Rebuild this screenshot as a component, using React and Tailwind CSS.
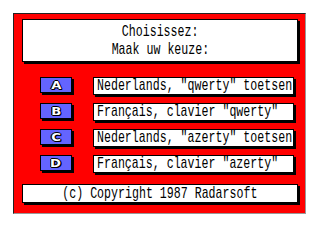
const options = [
  { key: "A", label: 'Nederlands, "qwerty" toetsen' },
  { key: "B", label: 'Français, clavier "qwerty"' },
  { key: "C", label: 'Nederlands, "azerty" toetsen' },
  { key: "D", label: 'Français, clavier "azerty"' },
];

function Txt({ children, origin = "origin-left" }) {
  return (
    <span
      className={`inline-block whitespace-pre text-[17px] leading-[18px] text-black scale-x-[0.683] ${origin}`}
      style={{ fontFamily: '"Liberation Mono", monospace' }}
    >
      {children}
    </span>
  );
}

export default function App() {
  return (
    <div className="w-[320px] h-[240px] bg-white overflow-hidden">
      <div className="ml-[13px] mt-[13px] w-[293px] h-[201px] bg-[#ff0000] border-t border-l border-[#222] border-r-[#999] border-b-[#999] border-r border-b px-[8px] pt-[5px]">
        <div className="w-[276px] h-[43px] bg-white border border-black shadow-[2px_2px_0_#000] flex flex-col items-center justify-center">
          <Txt origin="origin-center">Choisissez:</Txt>
          <Txt origin="origin-center">Maak uw keuze:</Txt>
        </div>

        <div className="mt-[15px] flex flex-col gap-[8px]">
          {options.map((o) => (
            <div key={o.key} className="flex items-start">
              <div className="ml-[18px] w-[32px] h-[16px] bg-[#6464ff] border border-black shadow-[2px_2px_0_#000] flex items-center justify-center">
                <span
                  className="text-[11px] leading-none font-bold text-white scale-x-[1.2] [text-shadow:1px_0_0_#000,-1px_0_0_#000,0_1px_0_#000,0_-1px_0_#000,1px_1px_0_#000]"
                  style={{ fontFamily: '"DejaVu Sans", sans-serif' }}
                >
                  {o.key}
                </span>
              </div>
              <div className="ml-[21px] w-[201px] h-[18px] bg-white border border-black shadow-[2px_2px_0_#000] flex items-center pl-[3px] overflow-visible">
                <Txt>{o.label}</Txt>
              </div>
            </div>
          ))}
        </div>

        <div className="mt-[11px] w-[276px] h-[19px] bg-white border border-black shadow-[2px_2px_0_#000] flex items-center justify-center">
          <Txt origin="origin-center">(c) Copyright 1987 Radarsoft</Txt>
        </div>
      </div>
    </div>
  );
}
